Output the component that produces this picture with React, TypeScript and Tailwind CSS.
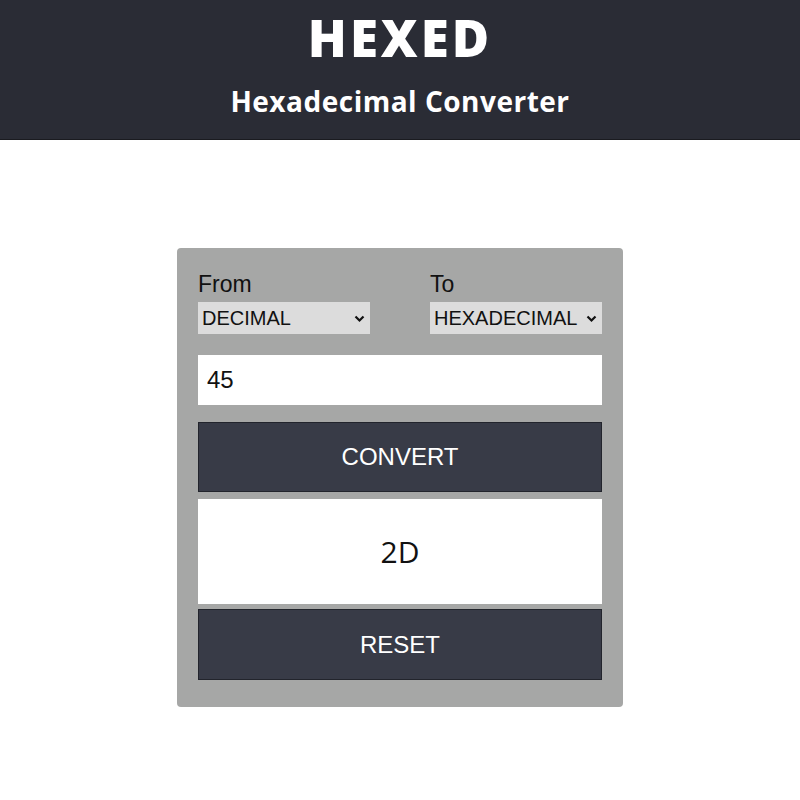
import { useState } from 'react';

const BASES: Record<string, number> = {
  BINARY: 2,
  OCTAL: 8,
  DECIMAL: 10,
  HEXADECIMAL: 16,
};

export default function App() {
  const [from, setFrom] = useState('DECIMAL');
  const [to, setTo] = useState('HEXADECIMAL');
  const [value, setValue] = useState('45');
  const [result, setResult] = useState('2D');

  const convert = () => {
    const n = parseInt(value, BASES[from]);
    setResult(isNaN(n) ? '' : n.toString(BASES[to]).toUpperCase());
  };

  const reset = () => {
    setValue('');
    setResult('');
  };

  return (
    <div className="min-h-screen bg-white font-['Liberation_Sans',Arial,sans-serif]">
      {/* Header */}
      <header className="h-[140px] bg-[#2a2c35] border-b border-[#1a1b20] flex flex-col items-center text-white font-['Open_Sans',sans-serif]">
        <h1 className="mt-[6px] text-[51px] leading-[62px] font-extrabold tracking-[3px]">HEXED</h1>
        <h2 className="mt-[16px] text-[28px] leading-[34px] font-bold tracking-[0.5px]">Hexadecimal Converter</h2>
      </header>

      {/* Converter card */}
      <main className="flex justify-center pt-[108px]">
        <div className="w-[446px] bg-[#a6a7a6] rounded-[4px] px-[21px] pt-[22px] pb-[27px]">
          <div className="flex justify-between">
            <div className="w-[172px]">
              <label className="block text-[23px] leading-[28px] text-[#111]">From</label>
              <Select value={from} onChange={setFrom} />
            </div>
            <div className="w-[172px]">
              <label className="block text-[23px] leading-[28px] text-[#111]">To</label>
              <Select value={to} onChange={setTo} />
            </div>
          </div>

          <input
            value={value}
            onChange={(e) => setValue(e.target.value)}
            className="mt-[21px] block w-full h-[50px] bg-white px-[9px] text-[24px] text-[#111] outline-none"
          />

          <button
            onClick={convert}
            className="mt-[17px] w-full h-[70px] bg-[#383b47] border border-[#22242c] text-white text-[24px]"
          >
            CONVERT
          </button>

          <div className="mt-[7px] h-[105px] bg-white flex items-center justify-center text-[30px] text-[#111] font-['Open_Sans',sans-serif]">
            {result}
          </div>

          <button
            onClick={reset}
            className="mt-[5px] w-full h-[71px] bg-[#383b47] border border-[#22242c] text-white text-[24px]"
          >
            RESET
          </button>
        </div>
      </main>
    </div>
  );
}

function Select({ value, onChange }: { value: string; onChange: (v: string) => void }) {
  return (
    <div className="relative mt-[4px] h-[32px] bg-[#dcdcdc]">
      <select
        value={value}
        onChange={(e) => onChange(e.target.value)}
        className="appearance-none w-full h-full bg-transparent pl-[4px] pr-[18px] text-[20px] text-[#111] outline-none"
      >
        {Object.keys(BASES).map((b) => (
          <option key={b} value={b}>
            {b}
          </option>
        ))}
      </select>
      <svg
        className="pointer-events-none absolute right-[5px] top-[13px]"
        width="11"
        height="8"
        viewBox="0 0 11 8"
      >
        <path d="M1.5 1.5 L5.5 5.5 L9.5 1.5" stroke="#111" strokeWidth="2.2" fill="none" />
      </svg>
    </div>
  );
}
